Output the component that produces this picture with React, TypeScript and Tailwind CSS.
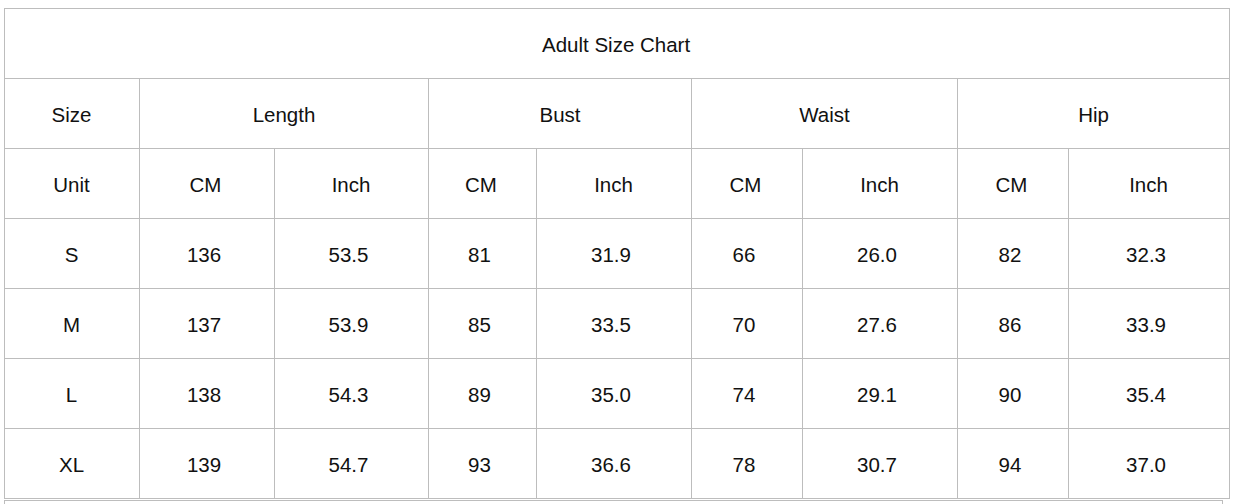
import React from "react";

const rows = [
  ["S", "136", "53.5", "81", "31.9", "66", "26.0", "82", "32.3"],
  ["M", "137", "53.9", "85", "33.5", "70", "27.6", "86", "33.9"],
  ["L", "138", "54.3", "89", "35.0", "74", "29.1", "90", "35.4"],
  ["XL", "139", "54.7", "93", "36.6", "78", "30.7", "94", "37.0"],
];

const widths = [135, 135, 154, 108, 155, 111, 155, 111, 161];

export default function App() {
  const td = "border border-[#bdbdbd] text-center align-middle pt-[4px] pb-0 pl-0";
  return (
    <div className="bg-white w-[1235px] h-[504px] overflow-hidden pt-[8px] pl-[4px] text-[#111] text-[20.5px]" style={{ fontFamily: '"Liberation Sans", Arial, sans-serif' }}>
      <table className="table-fixed border-collapse w-[1226px]">
        <colgroup>
          {widths.map((w, i) => (
            <col key={i} style={{ width: w }} />
          ))}
        </colgroup>
        <tbody>
          <tr className="h-[70px]">
            <td className={`${td} pr-[2px]`} colSpan={9}>Adult Size Chart</td>
          </tr>
          <tr className="h-[70px]">
            <td className={`${td} pr-[1px]`}>Size</td>
            <td className={`${td} pr-0`} colSpan={2}>Length</td>
            <td className={`${td} pr-0`} colSpan={2}>Bust</td>
            <td className={`${td} pr-0`} colSpan={2}>Waist</td>
            <td className={`${td} pr-0`} colSpan={2}>Hip</td>
          </tr>
          <tr className="h-[70px]">
            <td className={`${td} pr-[1px]`}>Unit</td>
            {["CM", "Inch", "CM", "Inch", "CM", "Inch", "CM", "Inch"].map((t, i) => (
              <td key={i} className={`${td} ${i % 2 === 0 ? "pr-[3px]" : "pr-[1px]"}`}>{t}</td>
            ))}
          </tr>
          {rows.map((r, ri) => (
            <tr key={ri} className="h-[70px]">
              {r.map((c, ci) => (
                <td key={ci} className={`${td} ${ci === 0 ? "pr-[1px]" : "pr-[6px]"}`}>{c}</td>
              ))}
            </tr>
          ))}
        </tbody>
      </table>
      <div className="w-[1219px] h-[20px] border-l border-t border-r border-[#bdbdbd] mt-[1px]"></div>
    </div>
  );
}
